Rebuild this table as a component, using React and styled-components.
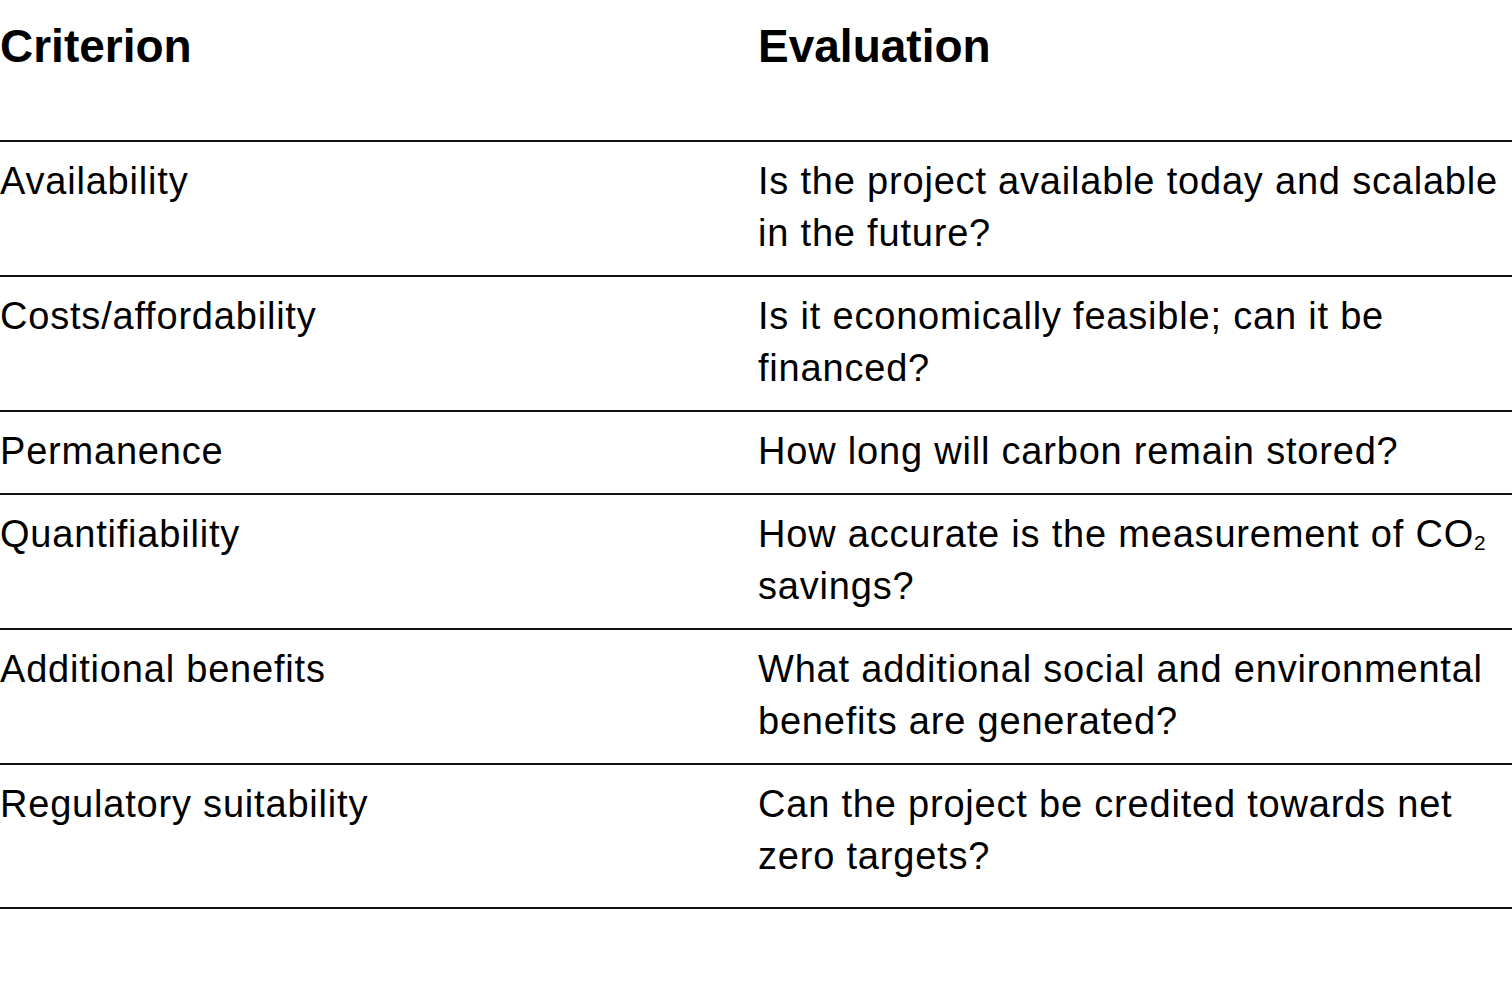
import React from "react";
import styled, { createGlobalStyle } from "styled-components";

const GlobalStyle = createGlobalStyle`
  body {
    margin: 0;
    background: #fff;
    color: #000;
    font-family: "Liberation Sans", Arial, sans-serif;
  }
`;

const Table = styled.div`
  width: 1512px;
`;

const Row = styled.div`
  display: grid;
  grid-template-columns: 758px 1fr;
  border-top: ${(p) => (p.$head ? "none" : "2px solid #111")};
  border-bottom: ${(p) => (p.$last ? "2px solid #111" : "none")};
  padding: ${(p) =>
    p.$head ? "20px 0 68px" : p.$last ? "13px 0 25px" : "13px 0 16px"};
`;

const HeadCell = styled.div`
  font-size: 46px;
  font-weight: 700;
  line-height: 52px;
`;

const Cell = styled.div`
  font-size: 38px;
  line-height: 52px;
  letter-spacing: 0.8px;
`;

const Sub = styled.sub`
  font-size: 0.55em;
  line-height: 0;
  letter-spacing: 0;
  vertical-align: -0.15em;
`;

const rows = [
  ["Availability", "Is the project available today and scalable in the future?"],
  ["Costs/affordability", "Is it economically feasible; can it be financed?"],
  ["Permanence", "How long will carbon remain stored?"],
  [
    "Quantifiability",
    <>
      How accurate is the measurement of CO<Sub>2</Sub> savings?
    </>,
  ],
  ["Additional benefits", "What additional social and environmental benefits are generated?"],
  ["Regulatory suitability", "Can the project be credited towards net zero targets?"],
];

export default function App() {
  return (
    <>
      <GlobalStyle />
      <Table>
        <Row $head>
          <HeadCell>Criterion</HeadCell>
          <HeadCell>Evaluation</HeadCell>
        </Row>
        {rows.map(([c, e], i) => (
          <Row key={i} $last={i === rows.length - 1}>
            <Cell>{c}</Cell>
            <Cell>{e}</Cell>
          </Row>
        ))}
      </Table>
    </>
  );
}
